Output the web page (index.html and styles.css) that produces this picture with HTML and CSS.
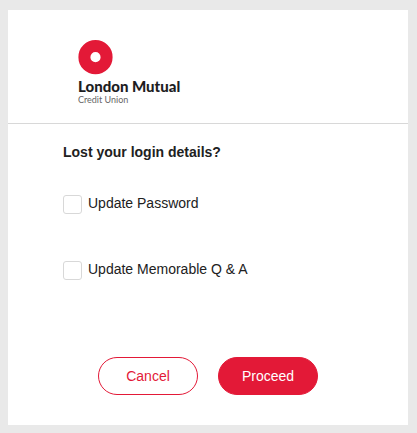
FILE: index.html
```html
<!DOCTYPE html>
<html lang="en">
<head>
<meta charset="utf-8">
<meta name="viewport" content="width=device-width, initial-scale=1">
<title>Lost your login details?</title>
<link rel="stylesheet" href="styles.css">
</head>
<body>
<main class="card">
  <header class="header">
    <svg class="mark" viewBox="0 0 35 35" aria-hidden="true">
      <circle cx="17.5" cy="17.2" r="11.1" fill="none" stroke="#e31937" stroke-width="12"/>
    </svg>
    <div class="brand">London Mutual</div>
    <div class="brand-sub">Credit Union</div>
  </header>
  <form class="form">
    <h1 class="title">Lost your login details?</h1>
    <div class="option">
      <input class="check" type="checkbox" id="password">
      <label for="password">Update Password</label>
    </div>
    <div class="option">
      <input class="check" type="checkbox" id="memorable">
      <label for="memorable">Update Memorable Q &amp; A</label>
    </div>
    <div class="actions">
      <button class="button" type="button">Cancel</button>
      <button class="button primary" type="submit">Proceed</button>
    </div>
  </form>
</main>
</body>
</html>
```
FILE: styles.css
```css
* {
  box-sizing: border-box;
}

body {
  margin: 0;
  padding: 10px 9px 8px 8px;
  background: #e9e9e9;
  color: #212121;
  font: 14px/20px "Liberation Sans", Arial, sans-serif;
}

.card {
  background: #fff;
}

.header {
  padding: 30px 70px 18px;
  border-bottom: 1px solid #d8d8d8;
}

.mark {
  display: block;
  width: 35px;
  height: 35px;
}

.brand {
  margin-top: 2px;
  color: #1d1d1f;
  font: 900 15px/18px Lato, sans-serif;
}

.brand-sub {
  color: #666;
  font: 9px/10px Lato, sans-serif;
}

.form {
  padding: 18px 55px 30px;
}

.title {
  margin: 0 0 31px;
  font-size: 14px;
  line-height: 20px;
}

.option {
  display: flex;
  align-items: flex-start;
  gap: 6px;
  height: 66px;
}

.check {
  appearance: none;
  width: 19px;
  height: 19px;
  margin: 2px 0 0;
  border: 1px solid #d8d8d8;
  border-radius: 3px;
  background: #fff;
}

.actions {
  display: flex;
  justify-content: center;
  gap: 20px;
  padding-top: 32px;
}

.button {
  width: 100px;
  height: 38px;
  padding: 0;
  border: 1px solid #e31937;
  border-radius: 19px;
  background: #fff;
  color: #e31937;
  font: inherit;
}

.primary {
  background: #e31937;
  color: #fff;
}
```
